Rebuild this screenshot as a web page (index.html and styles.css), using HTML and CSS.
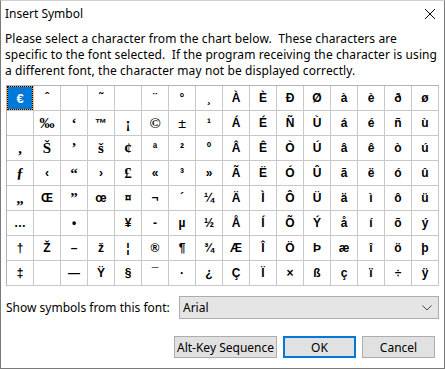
FILE: index.html
```html
<!DOCTYPE html>
<html>
<head>
<meta charset="utf-8">
<link rel="stylesheet" href="styles.css">
</head>
<body>
<div class="dialog">
  <div class="titlebar">
    <span class="title">Insert Symbol</span>
    <svg class="close" width="12" height="12" viewBox="0 0 12 12"><path d="M1 1 L11 11 M11 1 L1 11" stroke="#000" stroke-width="1" fill="none"/></svg>
  </div>
  <div class="content">
    <p class="intro"><span class="line">Please select a character from the chart below.&nbsp; These characters are</span><span class="line">specific to the font selected.&nbsp; If the program receiving the character is using</span><span class="line">a different font, the character may not be displayed correctly.</span></p>
    <div class="chart">
      <div class="cell"><span class="sel">€</span></div><div class="cell"></div><div class="cell s">‚</div><div class="cell s">ƒ</div><div class="cell s">„</div><div class="cell">…</div><div class="cell">†</div><div class="cell">‡</div>
      <div class="cell">ˆ</div><div class="cell s">‰</div><div class="cell s">Š</div><div class="cell">‹</div><div class="cell">Œ</div><div class="cell"></div><div class="cell">Ž</div><div class="cell"></div>
      <div class="cell"></div><div class="cell s">‘</div><div class="cell s">’</div><div class="cell s">“</div><div class="cell s">”</div><div class="cell">•</div><div class="cell">–</div><div class="cell">—</div>
      <div class="cell">˜</div><div class="cell">™</div><div class="cell s">š</div><div class="cell">›</div><div class="cell">œ</div><div class="cell"></div><div class="cell">ž</div><div class="cell">Ÿ</div>
      <div class="cell"></div><div class="cell s">¡</div><div class="cell s">¢</div><div class="cell s">£</div><div class="cell">¤</div><div class="cell">¥</div><div class="cell">¦</div><div class="cell">§</div>
      <div class="cell">¨</div><div class="cell s">©</div><div class="cell">ª</div><div class="cell">«</div><div class="cell">¬</div><div class="cell">-</div><div class="cell">®</div><div class="cell">¯</div>
      <div class="cell">°</div><div class="cell s">±</div><div class="cell">²</div><div class="cell">³</div><div class="cell">´</div><div class="cell">µ</div><div class="cell">¶</div><div class="cell">·</div>
      <div class="cell">¸</div><div class="cell">¹</div><div class="cell">º</div><div class="cell">»</div><div class="cell">¼</div><div class="cell">½</div><div class="cell">¾</div><div class="cell">¿</div>
      <div class="cell">À</div><div class="cell">Á</div><div class="cell">Â</div><div class="cell">Ã</div><div class="cell">Ä</div><div class="cell">Å</div><div class="cell">Æ</div><div class="cell">Ç</div>
      <div class="cell">È</div><div class="cell">É</div><div class="cell">Ê</div><div class="cell">Ë</div><div class="cell">Ì</div><div class="cell">Í</div><div class="cell">Î</div><div class="cell">Ï</div>
      <div class="cell">Ð</div><div class="cell">Ñ</div><div class="cell">Ò</div><div class="cell">Ó</div><div class="cell">Ô</div><div class="cell">Õ</div><div class="cell">Ö</div><div class="cell">×</div>
      <div class="cell">Ø</div><div class="cell">Ù</div><div class="cell">Ú</div><div class="cell">Û</div><div class="cell">Ü</div><div class="cell">Ý</div><div class="cell">Þ</div><div class="cell">ß</div>
      <div class="cell">à</div><div class="cell">á</div><div class="cell">â</div><div class="cell">ã</div><div class="cell">ä</div><div class="cell">å</div><div class="cell">æ</div><div class="cell">ç</div>
      <div class="cell">è</div><div class="cell">é</div><div class="cell">ê</div><div class="cell">ë</div><div class="cell">ì</div><div class="cell">í</div><div class="cell">î</div><div class="cell">ï</div>
      <div class="cell">ð</div><div class="cell">ñ</div><div class="cell">ò</div><div class="cell">ó</div><div class="cell">ô</div><div class="cell">õ</div><div class="cell">ö</div><div class="cell">÷</div>
      <div class="cell">ø</div><div class="cell">ù</div><div class="cell">ú</div><div class="cell">û</div><div class="cell">ü</div><div class="cell">ý</div><div class="cell">þ</div><div class="cell">ÿ</div>
    </div>
    <div class="fontrow">
      <span class="label">Show symbols from this font:</span>
      <div class="combo">
        <span class="combo-text">Arial</span>
        <svg class="chev" width="10" height="6" viewBox="0 0 10 6"><path d="M0.5 0.5 L5 5 L9.5 0.5" stroke="#444" stroke-width="1" fill="none"/></svg>
      </div>
    </div>
    <div class="buttons">
      <div class="btn btn-alt">Alt-Key Sequence</div>
      <div class="btn btn-ok">OK</div>
      <div class="btn btn-cancel">Cancel</div>
    </div>
  </div>
</div>
</body>
</html>
```
FILE: styles.css
```css
html, body {
  margin: 0;
  padding: 0;
  background: #ffffff;
}
.dialog {
  box-sizing: border-box;
  width: 445px;
  height: 369px;
  border: 1px solid #7a7a7a;
  border-top-color: #d0d0d0;
  background: #ffffff;
  font-family: "Noto Sans", sans-serif;
  font-size: 12px;
  color: #000;
  display: flex;
  flex-direction: column;
}
.titlebar {
  height: 25px;
  display: flex;
  align-items: center;
  justify-content: space-between;
  padding: 0 8px 0 4px;
}
.title {
  font-size: 12px;
}
.close {
  display: block;
}
.content {
  padding: 0 5px 0 4px;
}
.intro {
  margin: 5px 0 0 0;
  line-height: 16px;
  letter-spacing: 0.1px;
}
.line {
  display: block;
  white-space: nowrap;
}
.chart {
  margin: 6px 0 0 1px;
  display: grid;
  grid-auto-flow: column;
  grid-template-rows: repeat(8, 25px);
  grid-template-columns: repeat(16, 27px);
  width: max-content;
  border-left: 1px solid #b4b4b4;
  border-top: 1px solid #b4b4b4;
  font-family: "Liberation Sans", Arial, sans-serif;
  font-weight: bold;
  font-size: 12px;
}
.cell {
  box-sizing: border-box;
  border-right: 1px solid #c8c8c8;
  border-bottom: 1px solid #c8c8c8;
  display: flex;
  align-items: center;
  justify-content: center;
  line-height: 1;
}
.cell.s {
  font-family: "Liberation Serif", "Times New Roman", serif;
  font-size: 15px;
}
.sel {
  box-sizing: border-box;
  width: 26px;
  height: 24px;
  display: flex;
  align-items: center;
  justify-content: center;
  color: #fff;
  font-size: 13px;
  border: 1px dotted #000;
  background: linear-gradient(#0078d7, #0078d7) padding-box, #f29a33 border-box;
}
.fontrow {
  margin-top: 10px;
  display: flex;
  align-items: center;
}
.label {
  padding-left: 1px;
  width: 173px;
}
.combo {
  box-sizing: border-box;
  width: 260px;
  height: 23px;
  background: #e5e5e5;
  border: 1px solid #adadad;
  display: flex;
  align-items: center;
  justify-content: space-between;
  padding: 0 6px 0 3px;
}
.chev {
  display: block;
}
.buttons {
  margin-top: 17px;
  display: flex;
  justify-content: flex-end;
  gap: 6px;
  padding-right: 4px;
}
.btn {
  box-sizing: border-box;
  height: 22px;
  background: #e1e1e1;
  border: 1px solid #adadad;
  display: flex;
  align-items: center;
  justify-content: center;
}
.btn-alt { width: 103px; }
.btn-ok { width: 73px; border: 2px solid #0078d7; }
.btn-cancel { width: 73px; }
```
